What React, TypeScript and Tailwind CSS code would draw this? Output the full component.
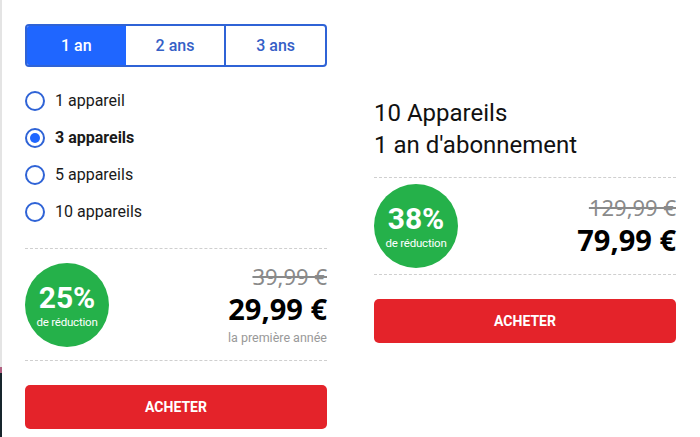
import React from "react";

function Radio({ checked }: { checked?: boolean }) {
  return (
    <span className="flex h-[20px] w-[20px] items-center justify-center rounded-full border-2 border-[#2f63d6] bg-white">
      {checked && <span className="block h-[10px] w-[10px] rounded-full bg-[#1f66ff]" />}
    </span>
  );
}

function Badge({ pct }: { pct: string }) {
  return (
    <div className="flex h-[84px] w-[84px] shrink-0 flex-col items-center justify-center rounded-full bg-[#25b14a] text-white" style={{ fontFamily: "Roboto, sans-serif" }}>
      <div className="text-[30px] font-bold leading-[34px]">{pct}</div>
      <div className="text-[11.5px] leading-[14px] tracking-[-0.2px]">de réduction</div>
    </div>
  );
}

function BuyButton() {
  return (
    <button className="flex h-[44px] w-full items-center justify-center rounded-[5px] bg-[#e4232a] text-[14px] font-bold text-white" style={{ fontFamily: "Roboto, sans-serif" }}>
      ACHETER
    </button>
  );
}

export default function App() {
  const devices = ["1 appareil", "3 appareils", "5 appareils", "10 appareils"];
  return (
    <div className="flex h-[437px] w-[700px] bg-white" style={{ fontFamily: "Roboto, 'Liberation Sans', sans-serif" }}>
      <div className="flex w-[2px] flex-col">
        <div className="flex-1 bg-[#e4e4e4]" />
        <div className="h-[6px] bg-[#b06080]" />
        <div className="h-[64px] bg-[#17252c]" />
      </div>
      <div className="w-[348px] pl-[23px] pr-[23px] pt-[24px]">
        <div className="flex h-[43px] overflow-hidden rounded-[4px] border-2 border-[#2f63d6] text-[16px] font-medium">
          <div className="flex flex-1 items-center justify-center bg-[#1f66ff] text-white">1 an</div>
          <div className="flex flex-1 items-center justify-center border-r-2 border-[#2f63d6] text-[#3560c6]">2 ans</div>
          <div className="flex flex-1 items-center justify-center text-[#3560c6]">3 ans</div>
        </div>
        <div className="mt-[15px] flex flex-col">
          {devices.map((d, i) => (
            <div key={d} className="flex h-[37px] items-center gap-[10px]">
              <Radio checked={i === 1} />
              <span className={`text-[16px] text-[#1a1a1a] ${i === 1 ? "font-bold" : ""}`}>{d}</span>
            </div>
          ))}
        </div>
        <div className="mt-[18px] border-t border-dashed border-[#cfcfcf]" />
        <div className="flex items-start justify-between pb-[13px] pt-[14px]">
          <Badge pct="25%" />
          <div className="flex flex-col items-end" style={{ fontFamily: "'Noto Sans', sans-serif" }}>
            <div className="text-[22px] leading-[26px] text-[#8a8a8a] line-through decoration-[#8a8a8a]">39,99 €</div>
            <div className="text-[29px] font-bold leading-[40px] text-black">29,99 €</div>
            <div className="mt-[1px] text-[12.5px] leading-[15px] text-[#999]" style={{ fontFamily: "Roboto, sans-serif" }}>la première année</div>
          </div>
        </div>
        <div className="border-t border-dashed border-[#cfcfcf]" />
        <div className="mt-[24px]">
          <BuyButton />
        </div>
      </div>
      <div className="w-[350px] pl-[24px] pr-[24px] pt-[97px]">
        <div className="text-[24px] leading-[32px] text-[#111]">
          <div>10 Appareils</div>
          <div>1 an d'abonnement</div>
        </div>
        <div className="mt-[16px] border-t border-dashed border-[#cfcfcf]" />
        <div className="flex items-start justify-between pb-[6px] pt-[6px]">
          <Badge pct="38%" />
          <div className="flex flex-col items-end pt-[10px]" style={{ fontFamily: "'Noto Sans', sans-serif" }}>
            <div className="text-[22px] leading-[26px] text-[#8a8a8a] line-through decoration-[#8a8a8a]">129,99 €</div>
            <div className="text-[29px] font-bold leading-[40px] text-black">79,99 €</div>
          </div>
        </div>
        <div className="border-t border-dashed border-[#cfcfcf]" />
        <div className="mt-[24px]">
          <BuyButton />
        </div>
      </div>
    </div>
  );
}
